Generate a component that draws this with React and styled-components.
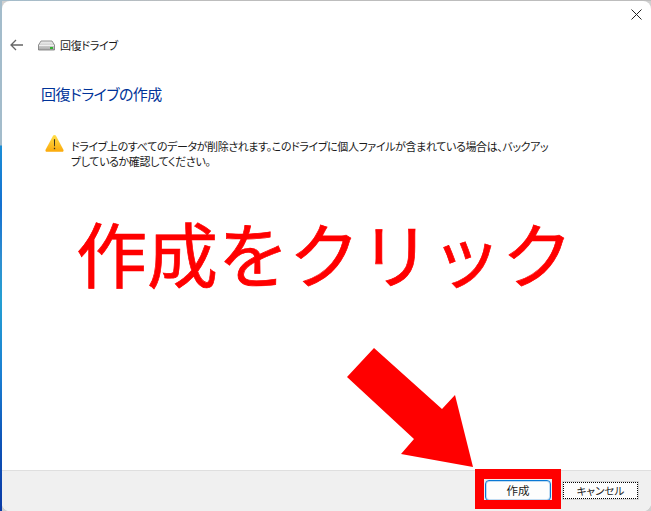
import React from "react";
import styled, { createGlobalStyle } from "styled-components";

const GlobalStyle = createGlobalStyle`
  html, body {
    margin: 0;
    padding: 0;
    width: 651px;
    height: 511px;
    overflow: hidden;
    font-family: "Noto Sans CJK JP", "Noto Sans", sans-serif;
  }
`;

const Desktop = styled.div`
  width: 651px;
  height: 511px;
  padding: 1px 0 0 2px;
  box-sizing: border-box;
  background:
    linear-gradient(
        180deg,
        #a3bccb 0,
        #a3bccb 145px,
        #1b8ed6 146px,
        #1470d0 205px,
        #2f8fd0 260px,
        #249fd2 300px,
        #1b7fd2 375px,
        #0f55b8 440px,
        #0a3aa5 511px
      )
      left / 2px 100% no-repeat,
    linear-gradient(90deg, #a3bccb, #bdbdbd 30%, #bdbdbd) top / 100% 1px no-repeat,
    #d0d0d0;
`;

const Window = styled.div`
  position: relative;
  height: 100%;
  display: flex;
  flex-direction: column;
  background: #fff;
  border-radius: 8px;
  overflow: hidden;
`;

const TitleBar = styled.div`
  height: 29px;
  display: flex;
  justify-content: flex-end;
  padding: 8px 9px 0 0;
  box-sizing: border-box;
`;

const NavRow = styled.div`
  display: flex;
  align-items: center;
  height: 30px;
  padding-left: 8px;
`;

const NavTitle = styled.span`
  margin-left: 5px;
  font-size: 11px;
  line-height: 30px;
  letter-spacing: -0.3px;
  color: #1a1a1a;
  font-feature-settings: "palt";
`;

const Content = styled.div`
  flex: 1;
  padding-left: 39px;
  display: flex;
  flex-direction: column;
`;

const Heading = styled.h1`
  margin: 23px 0 0;
  font-size: 15px;
  line-height: 22px;
  letter-spacing: -0.55px;
  font-weight: 400;
  color: #003399;
  font-feature-settings: "palt";
`;

const Notice = styled.div`
  display: flex;
  align-items: flex-start;
  gap: 8px;
  margin: 29px 0 0 4px;
`;

const NoticeText = styled.p`
  margin: 5px 0 0 -1px;
  font-size: 11px;
  line-height: 15px;
  letter-spacing: -0.38px;
  color: #1a1a1a;
  white-space: nowrap;
  font-feature-settings: "palt";
`;

const Callout = styled.div`
  margin: 37px 0 0 35px;
  font-size: 71px;
  font-weight: 400;
  line-height: 90px;
  color: #ff0000;
  -webkit-text-stroke: 0.7px #ff0000;
  white-space: nowrap;
`;

const Footer = styled.div`
  height: 41px;
  flex: none;
  display: flex;
  justify-content: flex-end;
  align-items: flex-start;
  gap: 12px;
  padding: 9px 13px 0 0;
  box-sizing: border-box;
  background: #f0f0f0;
  border-top: 1px solid #dfdfdf;
`;

const Button = styled.button`
  position: relative;
  width: 75px;
  height: 17px;
  margin-top: 2px;
  padding: 0;
  box-sizing: border-box;
  border-radius: 0;
  background: #fdfdfd;
  border: 1px dotted #000;
  box-shadow: 0 0 0 1px #d4d4d4;
  font-family: inherit;
  font-size: 10.5px;
  line-height: 15px;
  color: #1a1a1a;
  font-feature-settings: "palt";
`;

const PrimaryButton = styled(Button)`
  width: 66px;
  height: 21px;
  margin-top: 0;
  border: 1px solid #0a78d4;
  border-radius: 4px;
  box-shadow: inset 0 0 0 1px rgba(10, 120, 212, 0.25);
  font-size: 11.5px;
`;

const RedFrame = styled.span`
  position: absolute;
  left: -11px;
  right: -11px;
  top: -12px;
  bottom: -9px;
  border: 9px solid #ff0000;
  border-top-width: 10px;
  pointer-events: none;
`;

const ArrowOverlay = styled.svg`
  position: absolute;
  left: 338px;
  top: 339px;
`;

const BackIcon = () => (
  <svg width="14" height="12" viewBox="0 0 14 12" fill="none" stroke="#666" strokeWidth="1.3">
    <path d="M1 6h12M6 1 1 6l5 5" />
  </svg>
);

const DriveIcon = () => (
  <svg width="17" height="12" viewBox="0 0 17 12" style={{ marginLeft: 14 }}>
    <defs>
      <linearGradient id="driveBody" x1="0" y1="0" x2="0" y2="1">
        <stop offset="0" stopColor="#f2f2f2" />
        <stop offset="1" stopColor="#a8a8a8" />
      </linearGradient>
    </defs>
    <path d="M3 2h11l2.5 4v5H.5V6z" fill="url(#driveBody)" stroke="#777" strokeWidth=".8" />
    <rect x="1" y="6" width="15" height="1" fill="#fff" opacity=".7" />
    <rect x="12" y="8" width="3" height="2" fill="#35b034" />
  </svg>
);

const WarningIcon = () => (
  <svg width="19" height="19" viewBox="0 0 20 19" style={{ flex: "none" }}>
    <defs>
      <linearGradient id="warnFill" x1="0" y1="0" x2="0" y2="1">
        <stop offset="0" stopColor="#ffdf4a" />
        <stop offset="1" stopColor="#fba90a" />
      </linearGradient>
    </defs>
    <path
      d="M8.6 1.2c.6-1 2.2-1 2.8 0l8 14.8c.5 1-.2 2.2-1.4 2.2H2c-1.2 0-1.9-1.2-1.4-2.2z"
      fill="url(#warnFill)"
    />
    <path d="M9.4 5h1.2l-.15 7.5h-.9z" fill="#3a3320" />
    <rect x="9.3" y="14" width="1.4" height="1.5" fill="#3a3320" />
  </svg>
);

const CloseIcon = () => (
  <svg width="11" height="11" viewBox="0 0 11 11" stroke="#222" strokeWidth="1">
    <path d="M.5.5l10 10M10.5.5l-10 10" />
  </svg>
);

export default function App() {
  return (
    <>
      <GlobalStyle />
      <Desktop>
        <Window>
          <TitleBar>
            <CloseIcon />
          </TitleBar>
          <NavRow>
            <BackIcon />
            <DriveIcon />
            <NavTitle>回復ドライブ</NavTitle>
          </NavRow>
          <Content>
            <Heading>回復ドライブの作成</Heading>
            <Notice>
              <WarningIcon />
              <NoticeText>
                ドライブ上のすべてのデータが削除されます。このドライブに個人ファイルが含まれている場合は、バックアッ
                <br />
                プしているか確認してください。
              </NoticeText>
            </Notice>
            <Callout>作成をクリック</Callout>
          </Content>
          <Footer>
            <PrimaryButton>
              作成
              <RedFrame />
            </PrimaryButton>
            <Button>キャンセル</Button>
          </Footer>
          <ArrowOverlay width="140" height="135" viewBox="340 340 140 135">
            <path
              d="M374 348 347 377 414 439 401 454 473 467 455 395 442 409z"
              fill="#ff0000"
            />
          </ArrowOverlay>
        </Window>
      </Desktop>
    </>
  );
}
